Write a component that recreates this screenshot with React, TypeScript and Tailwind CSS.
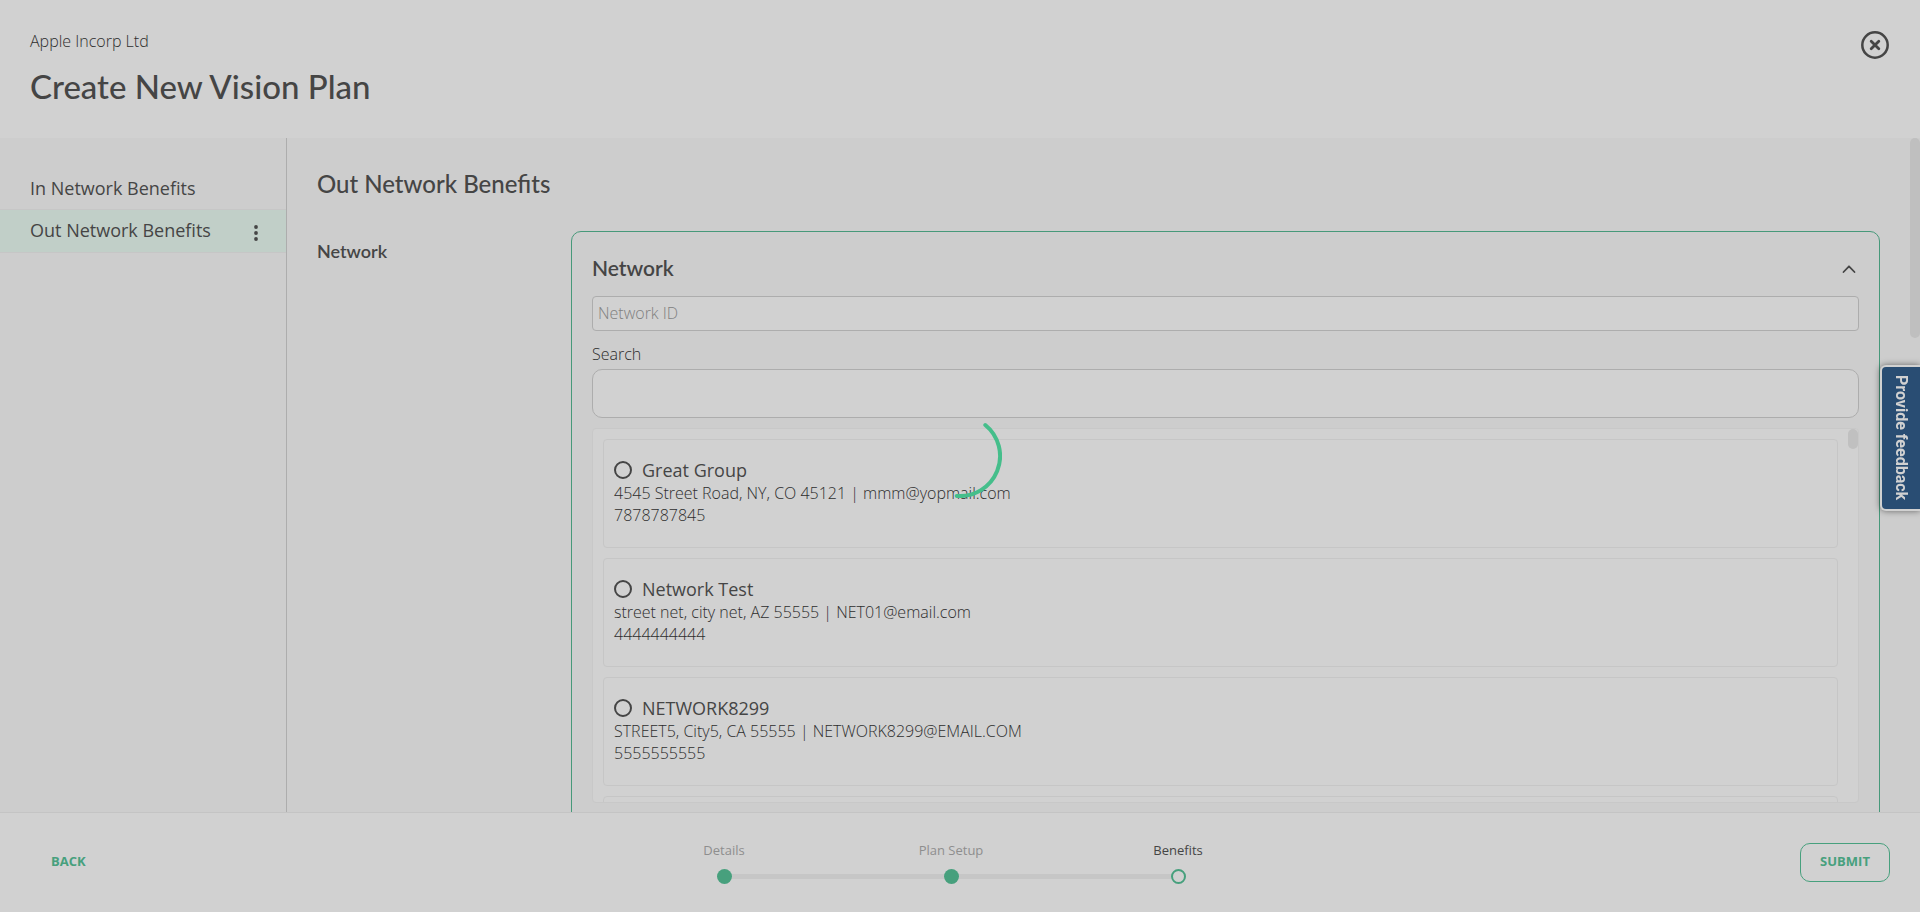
type Network = { name: string; address: string; email: string; phone: string };

const networks: Network[] = [
  { name: 'Great Group', address: '4545 Street Road, NY, CO 45121', email: 'mmm@yopmail.com', phone: '7878787845' },
  { name: 'Network Test', address: 'street net, city net, AZ 55555', email: 'NET01@email.com', phone: '4444444444' },
  { name: 'NETWORK8299', address: 'STREET5, City5, CA 55555', email: 'NETWORK8299@EMAIL.COM', phone: '5555555555' },
];

const steps = [
  { label: 'Details', done: true },
  { label: 'Plan Setup', done: true },
  { label: 'Benefits', done: false },
];

function Header() {
  return (
    <header className="flex items-start justify-between bg-[#d1d1d1] px-[30px] pt-[30px] pb-[30px]">
      <div>
        <p className="text-base leading-[22px] font-light text-[#2e2e2e]">Apple Incorp Ltd</p>
        <h1 className="mt-3 font-['Lato'] text-[33px] leading-[44px] font-medium">Create New Vision Plan</h1>
      </div>
      <button type="button" aria-label="Close">
        <svg className="size-[30px]" viewBox="0 0 30 30" fill="none" stroke="currentColor" strokeLinecap="round">
          <circle cx="15" cy="15" r="12.7" strokeWidth="2.5" />
          <path d="M11.2 11.2l7.6 7.6M18.8 11.2l-7.6 7.6" strokeWidth="2.8" />
        </svg>
      </button>
    </header>
  );
}

function Sidebar() {
  return (
    <nav className="w-[287px] shrink-0 border-r border-[#adadad] pt-[29px] text-lg">
      <a href="#in-network" className="flex h-[42px] items-center px-[30px]">In Network Benefits</a>
      <div className="flex h-11 items-center justify-between border-y border-[#c6c6c6] bg-[#c1cfc8] pr-6 pl-[30px]">
        <a href="#out-network" className="pb-[2px]">Out Network Benefits</a>
        <button type="button" aria-label="More options" className="pt-1">
          <svg className="h-4 w-3" viewBox="0 0 12 16" fill="currentColor">
            <circle cx="6" cy="2" r="1.900" />
            <circle cx="6" cy="8" r="1.900" />
            <circle cx="6" cy="14" r="1.900" />
          </svg>
        </button>
      </div>
    </nav>
  );
}

function NetworkCard({ network }: { network: Network }) {
  return (
    <li className="h-[109px] shrink-0 rounded border border-[#c6c6c6] px-[10px] pt-[19px]">
      <label className="flex items-center gap-[10px] text-lg leading-[22px]">
        <input type="radio" name="network" className="size-[18px] appearance-none rounded-full border-2 border-[#454545]" />
        {network.name}
      </label>
      <p className="mt-px text-base leading-[22px] font-light text-[#2e2e2e]">{network.address} | {network.email}</p>
      <p className="text-base leading-[22px] font-light text-[#2e2e2e]">{network.phone}</p>
    </li>
  );
}

function NetworkPanel() {
  return (
    <section className="h-[620px] min-w-0 flex-1 rounded-[10px] border border-[#47997a] px-5 pt-[18px]">
      <div className="flex h-9 items-center justify-between">
        <h3 className="font-['Lato'] text-[21px] font-semibold">Network</h3>
        <button type="button" aria-label="Collapse" className="pt-[2px] pr-[2px]">
          <svg className="size-4" viewBox="0 0 16 16" fill="none" stroke="currentColor" strokeWidth="1.8" strokeLinecap="round" strokeLinejoin="round">
            <path d="M2.5 11L8 5.3l5.500 5.700" />
          </svg>
        </button>
      </div>
      <input
        aria-label="Network ID"
        placeholder="Network ID"
        className="mt-[10px] block h-[35px] w-full rounded border border-[#adadad] bg-[#d1d1d1] px-[5px] pb-[2px] text-base font-light placeholder:text-[#808080]"
      />
      <label htmlFor="search" className="mt-3 block text-base leading-[22px] font-light text-[#2e2e2e]">Search</label>
      <input id="search" className="mt-1 block h-[49px] w-full rounded-[10px] border border-[#adadad] bg-[#d1d1d1] px-4" />
      <div className="relative mt-[10px] h-[375px] overflow-hidden rounded border border-[#c8c8c8] bg-[#d1d1d1] pt-[10px] pr-5 pl-[10px]">
        <ul className="flex flex-col gap-[10px]">
          {networks.map((n) => <NetworkCard key={n.name} network={n} />)}
          <li className="h-[109px] rounded border border-[#c6c6c6]" />
        </ul>
        <div className="absolute top-0 right-0 h-5 w-[10px] rounded-full bg-[#c0c0c0]" />
      </div>
    </section>
  );
}

function Footer() {
  return (
    <footer className="grid h-[100px] shrink-0 grid-cols-[1fr_auto_1fr] items-center border-t border-[#c4c4c4] bg-[#d1d1d1] px-[30px] text-[13px]">
      <button type="button" className="justify-self-start px-[21px] pt-2 pb-[10px] font-bold text-[#47a07d]">BACK</button>
      <ol className="mr-[18px] grid grid-cols-[227px_227px_227px]">
        {steps.map((step, i) => (
          <li key={step.label} className="flex flex-col items-center">
            <span className={step.done ? 'leading-[18px] text-[#8e8e8e]' : 'leading-[18px]'}>{step.label}</span>
            <div className="mt-[10px] flex w-full items-center">
              <span className={i === 0 ? 'h-[5px] flex-1' : 'h-[5px] flex-1 bg-[#c6c6c6]'} />
              <span className={step.done ? 'size-[15px] rounded-full bg-[#47a07d]' : 'size-[15px] rounded-full border-2 border-[#47a07d]'} />
              <span className={i === 2 ? 'h-[5px] flex-1' : 'h-[5px] flex-1 bg-[#c6c6c6]'} />
            </div>
          </li>
        ))}
      </ol>
      <button type="button" className="h-[39px] w-[90px] justify-self-end rounded-[10px] border border-[#47a07d] pb-[2px] font-bold text-[#47a07d]">
        SUBMIT
      </button>
    </footer>
  );
}

export default function App() {
  return (
    <div className="flex h-screen flex-col overflow-hidden bg-[#cdcdcd] font-['Open_Sans',sans-serif] text-[#454545]">
      <Header />
      <div className="relative flex min-h-0 flex-1 overflow-hidden">
        <Sidebar />
        <main className="min-w-0 flex-1 pt-7 pr-10 pl-[30px]">
          <h2 className="font-['Lato'] text-2xl leading-9 font-medium">Out Network Benefits</h2>
          <div className="mt-[29px] flex">
            <h3 className="w-[254px] shrink-0 pt-[6px] font-['Lato'] text-lg font-semibold">Network</h3>
            <NetworkPanel />
          </div>
        </main>
        <div className="absolute top-0 right-0 h-[200px] w-[10px] rounded-full bg-[#bfbfbf]" />
      </div>
      <Footer />
      <button
        type="button"
        className="fixed top-[365px] right-0 flex h-[146px] w-10 items-center justify-center rounded-l-md border-2 border-r-0 border-[#d1d1d1] bg-[#294d73] font-['Roboto'] text-base font-bold text-[#d1d1d1] shadow-[0_0_6px_rgba(0,0,0,0.5)] [writing-mode:vertical-rl]"
      >
        Provide feedback
      </button>
      <div role="status" aria-label="Loading" className="pointer-events-none fixed inset-0 flex items-center justify-center">
        <svg className="size-[84px]" viewBox="0 0 84 84" fill="none" stroke="#45be8b" strokeWidth="4" strokeLinecap="round">
          <path d="M67.300 11A40 40 0 0 1 38.700 81.900" />
        </svg>
      </div>
    </div>
  );
}
